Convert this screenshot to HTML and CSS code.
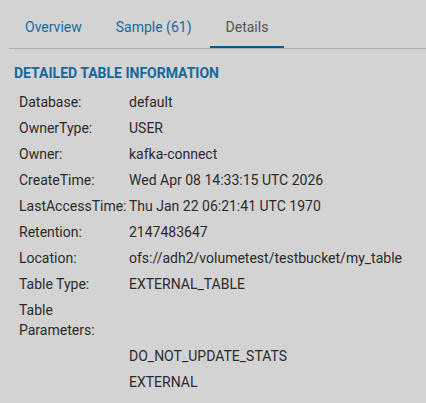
FILE: index.html
```html
<!DOCTYPE html>
<html lang="en">
<head>
  <meta charset="UTF-8">
  <meta name="viewport" content="width=device-width, initial-scale=1.0" />
  <title>Table Details</title>
  <link rel="stylesheet" href="styles.css">
</head>
<body>
  <ul class="tabs">
    <li><a href="#">Overview</a></li>
    <li><a href="#">Sample (61)</a></li>
    <li class="active"><a href="#">Details</a></li>
  </ul>

  <div class="details">
    <h3>Detailed Table Information</h3>
    <table class="info">
      <tr><td class="label">Database:</td><td>default</td></tr>
      <tr><td class="label">OwnerType:</td><td>USER</td></tr>
      <tr><td class="label">Owner:</td><td>kafka-connect</td></tr>
      <tr><td class="label">CreateTime:</td><td>Wed Apr 08 14:33:15 UTC 2026</td></tr>
      <tr><td class="label">LastAccessTime:</td><td>Thu Jan 22 06:21:41 UTC 1970</td></tr>
      <tr><td class="label">Retention:</td><td>2147483647</td></tr>
      <tr><td class="label">Location:</td><td>ofs://adh2/volumetest/testbucket/my_table</td></tr>
      <tr><td class="label">Table Type:</td><td>EXTERNAL_TABLE</td></tr>
      <tr><td class="label">Table Parameters:</td><td></td></tr>
      <tr><td class="label"></td><td>DO_NOT_UPDATE_STATS</td></tr>
      <tr><td class="label"></td><td>EXTERNAL</td></tr>
    </table>
  </div>
</body>
</html>
```

FILE: styles.css
```css
* {
  box-sizing: border-box;
  margin: 0;
  padding: 0;
  font-family: Roboto, 'Liberation Sans', sans-serif;
}

body {
  background-color: #d3d3d3;
  color: #333;
  font-size: 14px;
  line-height: 20px;
}

/* tab strip */
.tabs {
  list-style: none;
  display: flex;
  gap: 2px;
  margin-left: 9px;
  padding-top: 7px;
  border-bottom: 1px solid #adadad;
}

.tabs li a {
  display: block;
  padding: 10px 16px 9px;
  border-bottom: 2px solid transparent;
  color: #1f6a98;
  text-decoration: none;
}

.tabs li.active a {
  color: #555;
  border-bottom-color: #0b5a8c;
}

/* details panel */
.details {
  padding: 14px 14px 0;
}

.details h3 {
  font-size: 14px;
  font-weight: bold;
  text-transform: uppercase;
  color: #17679a;
  margin-bottom: 6px;
}

.info {
  border-collapse: collapse;
}

.info td {
  padding: 3px 0;
  vertical-align: top;
  color: #2b2b2b;
}

.info td.label {
  width: 115px;
  padding-left: 5px;
}
```
